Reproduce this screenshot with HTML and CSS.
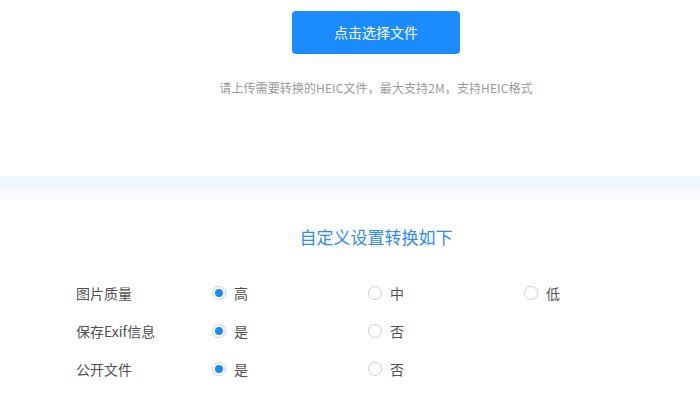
FILE: index.html
```html
<!DOCTYPE html>
<html lang="zh-CN">
<head>
<meta charset="utf-8">
<title>HEIC转换</title>
<link rel="stylesheet" href="styles.css">
</head>
<body>
<section class="upload">
  <div class="inner">
    <button class="btn" type="button">点击选择文件</button>
    <p class="hint">请上传需要转换的HEIC文件，最大支持2M，支持HEIC格式</p>
  </div>
</section>
<div class="band-a"></div>
<div class="band-b"></div>
<section class="settings">
  <div class="inner">
    <h2 class="title">自定义设置转换如下</h2>
  </div>
  <div class="rows">
    <div class="row">
      <span class="label">图片质量</span>
      <span class="opt"><i class="radio on"></i>高</span>
      <span class="opt"><i class="radio"></i>中</span>
      <span class="opt"><i class="radio"></i>低</span>
    </div>
    <div class="row">
      <span class="label">保存Exif信息</span>
      <span class="opt"><i class="radio on"></i>是</span>
      <span class="opt"><i class="radio"></i>否</span>
    </div>
    <div class="row">
      <span class="label">公开文件</span>
      <span class="opt"><i class="radio on"></i>是</span>
      <span class="opt"><i class="radio"></i>否</span>
    </div>
  </div>
</section>
</body>
</html>
```
FILE: styles.css
```css
* { box-sizing: border-box; }
html, body { margin: 0; padding: 0; background: #fff; }
body {
  width: 700px;
  height: 401px;
  overflow: hidden;
  font-family: "Noto Sans CJK SC", "Noto Sans", sans-serif;
  color: #555;
}
.inner {
  padding-left: 52px;
  display: flex;
  flex-direction: column;
  align-items: center;
}
.upload {
  height: 176px;
  padding-top: 11px;
}
.btn {
  width: 168px;
  height: 43px;
  border: 0;
  border-radius: 4px;
  background: #1a8cff;
  color: #fff;
  font-family: inherit;
  font-size: 14px;
  line-height: 43px;
  padding: 0;
}
.hint {
  margin: 24px 0 0;
  font-size: 12px;
  line-height: 20px;
  color: #9a9a9a;
  letter-spacing: 0.1px;
}
.band-a { height: 12px; background: #eef6ff; }
.band-b { height: 11px; background: #f6faff; }
.settings { padding-top: 26px; }
.title {
  margin: 0;
  font-size: 17px;
  font-weight: normal;
  line-height: 24px;
  color: #2a8cff;
}
.rows {
  margin-top: 25px;
  padding-left: 76px;
}
.row {
  display: flex;
  align-items: center;
  height: 38px;
  font-size: 14px;
}
.label { width: 136px; color: #505050; }
.opt {
  width: 156px;
  display: flex;
  align-items: center;
  gap: 8px;
  color: #505050;
}
.radio {
  width: 14px;
  height: 14px;
  border-radius: 50%;
  border: 1px solid #cfcfcf;
  background: #fff;
  display: flex;
  align-items: center;
  justify-content: center;
}
.radio.on { border-color: #c8d2de; }
.radio.on::after {
  content: "";
  width: 8px;
  height: 8px;
  border-radius: 50%;
  background: #1a8cff;
}
```
